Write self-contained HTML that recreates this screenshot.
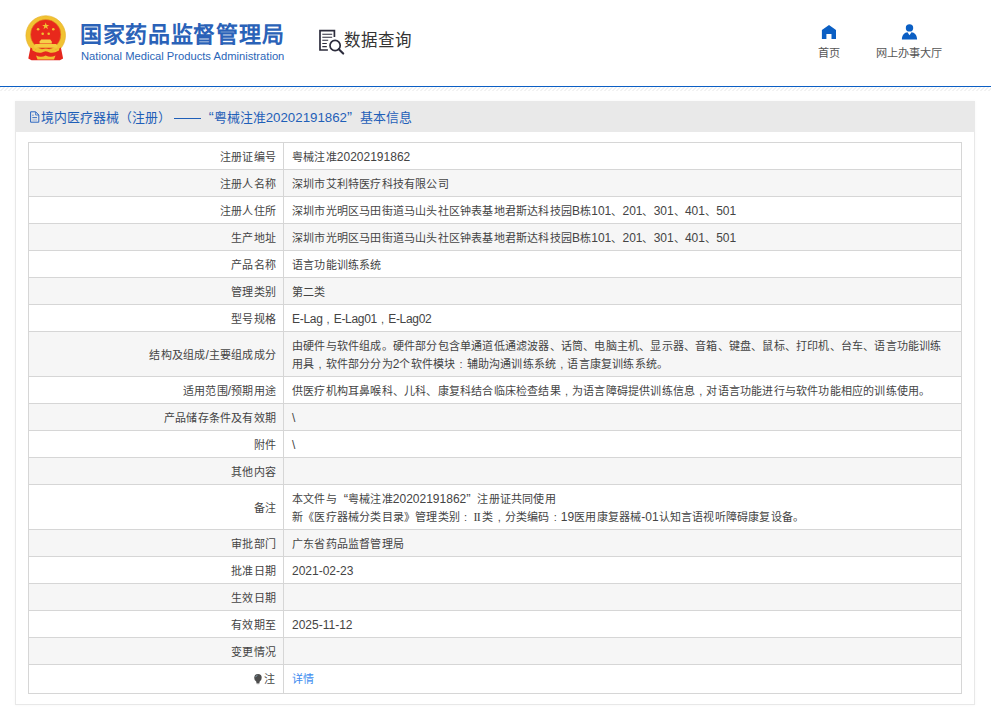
<!DOCTYPE html>
<html lang="zh-CN">
<head>
<meta charset="utf-8">
<style>
*{margin:0;padding:0;box-sizing:border-box;}
html,body{width:991px;height:714px;overflow:hidden;background:#fff;font-family:"Liberation Sans",sans-serif;}
#hdr{position:absolute;left:0;top:0;width:991px;height:86px;background:#fff;}
#hline{position:absolute;left:0;top:85.6px;width:991px;height:1.4px;background:#0b5fc4;}
#stripe{position:absolute;left:0;top:87px;}
#emb{position:absolute;left:0;top:0;}
#t1{position:absolute;left:80px;top:21px;font-size:22px;font-weight:bold;color:#2a62b8;white-space:nowrap;line-height:28px;letter-spacing:0.7px;}
#t2{position:absolute;left:81px;top:48.5px;font-size:11.2px;color:#2a66b8;white-space:nowrap;line-height:14px;}
#sq{position:absolute;left:310px;top:20px;}
#sqt{position:absolute;left:344px;top:28px;font-size:16.5px;color:#333;white-space:nowrap;line-height:24px;}
.nav{position:absolute;top:44px;font-size:11.15px;line-height:18px;color:#555;white-space:nowrap;}
#navic{position:absolute;left:810px;top:15px;}
#panel{position:absolute;left:15px;top:101px;width:960px;height:604px;border:1px solid #e8e8e8;border-top:none;box-shadow:0 0 3px rgba(0,0,0,0.04);}
#ph{position:absolute;left:15px;top:101px;width:960px;height:31px;background:#e9e9e9;}
#pht{position:absolute;left:40.6px;top:108px;font-size:12.9px;color:#1f5fb8;white-space:nowrap;line-height:18px;}
#phi{position:absolute;left:26px;top:106px;}
.dash{display:inline-block;width:27.7px;height:1px;background:#1f5fb8;margin-left:3px;margin-right:-0.5px;vertical-align:3.5px;}
.q1,.q2{display:inline-block;width:12.9px;font-size:15px;}
.q1{text-align:right;}
.d13{font-size:13.3px;}
table{position:absolute;left:28px;top:142px;width:934px;border-collapse:collapse;font-size:11px;letter-spacing:0.2px;color:#444;}
.e{font-size:12px;letter-spacing:0;}
.c{display:inline-block;width:11.2px;text-align:center;letter-spacing:0;}
.r2{font-family:"Liberation Serif",serif;font-size:12px;letter-spacing:-0.6px;}
table .q1,table .q2{width:11.2px;letter-spacing:0;font-size:13px;}
.lnk{color:#3d8cf0;}
.pin{display:inline-block;vertical-align:-2px;margin-right:0.5px;}
td{border:1px solid #d6d6d6;line-height:18px;padding:4.5px 14px 3.5px 8px;vertical-align:middle;}
td.l{width:255px;text-align:right;padding-right:7px;}
tr:nth-child(even) td{background:#f6f6f6;}
</style>
</head>
<body>
<div id="hdr"></div>
<div id="hline"></div>
<svg id="stripe" width="991" height="5" viewBox="0 0 991 5"><defs><pattern id="pt" width="4" height="4" patternUnits="userSpaceOnUse" y="0.5"><path d="M-1 5 L5 -1" stroke="#e2e2e2" stroke-width="0.9"/></pattern></defs><rect width="991" height="4" fill="url(#pt)"/></svg>
<svg id="emb" width="80" height="70" viewBox="0 0 80 70">
 <circle cx="45.7" cy="35.5" r="19.8" fill="#f1c232" stroke="#e4ad22" stroke-width="0.6"/>
 <circle cx="45.7" cy="34.6" r="15.2" fill="#e8291c" stroke="#d9a21f" stroke-width="0.5"/>
 <path d="M41.2 39.6 H50.2 L51.8 41.6 V43.6 H39.6 V41.6 Z" fill="#f7d048"/>
 <path d="M35.5 44 H56 L57.3 45.2 V47.8 H34.2 V45.2 Z" fill="#f5cb3f"/>
 <path d="M30.5 47.5 L28.3 58.5 L31.5 60.3 L59.9 60.3 L63.1 58.5 L60.9 47.5 Q53 52 45.7 51 Q38.5 52 30.5 47.5 Z" fill="#e5271d"/>
 <path d="M32 47.5 Q38 51.5 42 49.5 Q45.7 47.5 49.5 49.5 Q53.5 51.5 59.5 47.5 L59 50.5 Q53 54 49 52.2 Q45.7 50.5 42.5 52.2 Q38.5 54 32.5 50.5 Z" fill="#f1c232"/>
 <path d="M36 55.5 Q41 58 45.7 55.5 Q50.5 58 55.5 55.5 L54 59.5 L37.5 59.5 Z" fill="#f1c232"/>
 <g fill="#f1c232">
 <polygon points="45.7,22.4 46.6,25 49.3,25 47.1,26.6 47.9,29.2 45.7,27.6 43.5,29.2 44.3,26.6 42.1,25 44.8,25"/>
 <circle cx="38.1" cy="29.3" r="1.3"/><circle cx="53.3" cy="29.3" r="1.3"/>
 <circle cx="42.7" cy="33.8" r="1.3"/><circle cx="48.7" cy="33.8" r="1.3"/>
 </g>
</svg>
<div id="t1">国家药品监督管理局</div>
<div id="t2">National Medical Products Administration</div>
<svg id="sq" width="40" height="40" viewBox="310 20 40 40">
 <g fill="none" stroke="#2c2c3c" stroke-width="1.7">
 <path d="M334.4 37 V30.7 H320 V50 H327.9"/>
 <circle cx="335.1" cy="45.5" r="5.1"/>
 </g>
 <path d="M338.8 49.2 L343.2 53.6" stroke="#2c2c3c" stroke-width="2.1" stroke-linecap="round"/>
 <g stroke="#2c2c3c" stroke-width="1.1">
 <path d="M322.3 34.3 H332.2 M322.3 37.2 H332.2 M322.3 40.3 H328.2 M322.3 43.5 H326.8 M322.3 46.6 H326.8"/>
 </g>
</svg>
<div id="sqt">数据查询</div>
<svg id="navic" width="140" height="30" viewBox="810 15 140 30">
 <path d="M821.9 38.9 V30.1 L829 24.9 L836 30.1 V38.9 H831.5 V34 H826.4 V38.9 Z" fill="#0b5fc4"/>
 <circle cx="909.5" cy="27.9" r="3.7" fill="#0b5fc4"/>
 <path d="M901.9 39.5 C901.9 35.2 904.6 32.3 907.5 32.3 L909.5 35.2 L911.5 32.3 C914.4 32.3 917.1 35.2 917.1 39.5 Z" fill="#0b5fc4"/>
</svg>
<div class="nav" style="left:818px;">首页</div>
<div class="nav" style="left:876px;">网上办事大厅</div>
<div id="panel"></div>
<div id="ph"></div>
<svg id="phi" width="20" height="20" viewBox="26 106 20 20">
 <path d="M30.6 111.8 H35.6 L38.8 115 V122.2 H30.6 Z" fill="none" stroke="#2a66c0" stroke-width="1"/>
 <path d="M35.6 111.8 V115 H38.8" fill="none" stroke="#2a66c0" stroke-width="0.8"/>
 <path d="M32.3 115.2 H33.6 M32.3 117.6 H37 " stroke="#2a66c0" stroke-width="0.9"/>
 <path d="M32.3 120 H37" stroke="#8fa9d6" stroke-width="0.9"/>
</svg>
<div id="pht">境内医疗器械（注册）<span class="dash"></span><span class="q1">“</span>粤械注准<span class="d13">20202191862</span><span class="q2">”</span>基本信息</div>
<table>
<tr><td class="l">注册证编号</td><td>粤械注准<span class="e">20202191862</span></td></tr>
<tr><td class="l">注册人名称</td><td>深圳市艾利特医疗科技有限公司</td></tr>
<tr><td class="l">注册人住所</td><td>深圳市光明区马田街道马山头社区钟表基地君斯达科技园<span class="e">B</span>栋<span class="e">101</span>、<span class="e">201</span>、<span class="e">301</span>、<span class="e">401</span>、<span class="e">501</span></td></tr>
<tr><td class="l">生产地址</td><td>深圳市光明区马田街道马山头社区钟表基地君斯达科技园<span class="e">B</span>栋<span class="e">101</span>、<span class="e">201</span>、<span class="e">301</span>、<span class="e">401</span>、<span class="e">501</span></td></tr>
<tr><td class="l">产品名称</td><td>语言功能训练系统</td></tr>
<tr><td class="l">管理类别</td><td>第二类</td></tr>
<tr><td class="l">型号规格</td><td><span class="e" style="letter-spacing:-0.3px">E-Lag</span><span class="c">,</span><span class="e" style="letter-spacing:-0.3px">E-Lag01</span><span class="c">,</span><span class="e" style="letter-spacing:-0.3px">E-Lag02</span></td></tr>
<tr><td class="l">结构及组成<span class="e">/</span>主要组成成分</td><td>由硬件与软件组成。硬件部分包含单通道低通滤波器、话筒、电脑主机、显示器、音箱、键盘、鼠标、打印机、台车、语言功能训练<br>用具<span class="c">,</span>软件部分分为<span class="e">2</span>个软件模块<span class="c">:</span>辅助沟通训练系统<span class="c">,</span>语言康复训练系统。</td></tr>
<tr><td class="l">适用范围<span class="e">/</span>预期用途</td><td>供医疗机构耳鼻喉科、儿科、康复科结合临床检查结果<span class="c">,</span>为语言障碍提供训练信息<span class="c">,</span>对语言功能进行与软件功能相应的训练使用。</td></tr>
<tr><td class="l">产品储存条件及有效期</td><td><span class="e">\</span></td></tr>
<tr><td class="l">附件</td><td><span class="e">\</span></td></tr>
<tr><td class="l">其他内容</td><td></td></tr>
<tr><td class="l">备注</td><td>本文件与<span class="q1">“</span>粤械注准<span class="e">20202191862</span><span class="q2">”</span>注册证共同使用<br>新《医疗器械分类目录》管理类别<span class="c">:</span><span class="c r2">II</span>类<span class="c">,</span>分类编码<span class="c">:</span><span class="e">19</span>医用康复器械<span class="e">-01</span>认知言语视听障碍康复设备。</td></tr>
<tr><td class="l">审批部门</td><td>广东省药品监督管理局</td></tr>
<tr><td class="l">批准日期</td><td><span class="e">2021-02-23</span></td></tr>
<tr><td class="l">生效日期</td><td></td></tr>
<tr><td class="l">有效期至</td><td><span class="e">2025-11-12</span></td></tr>
<tr><td class="l">变更情况</td><td></td></tr>
<tr><td class="l" style="padding:5px 8px 5px 8px"><svg class="pin" width="10" height="12" viewBox="0 0 10 12"><path d="M3.2 8.6 Q1.2 7.2 1.2 4.8 A3.75 3.75 0 1 1 8.7 4.8 Q8.7 7.2 6.7 8.6 L6.3 10.4 H3.6 Z" fill="#4d4d4d"/><path d="M3.7 10.3 H6.2 V11.2 H3.7Z" fill="#aaa"/><path d="M2.6 4.2 Q3 2.6 4.6 2.2" stroke="#8ab" stroke-width="0.8" fill="none"/></svg>注</td><td class="lnk" style="padding-top:5px;padding-bottom:5px">详情</td></tr>
</table>
</body>
</html>
